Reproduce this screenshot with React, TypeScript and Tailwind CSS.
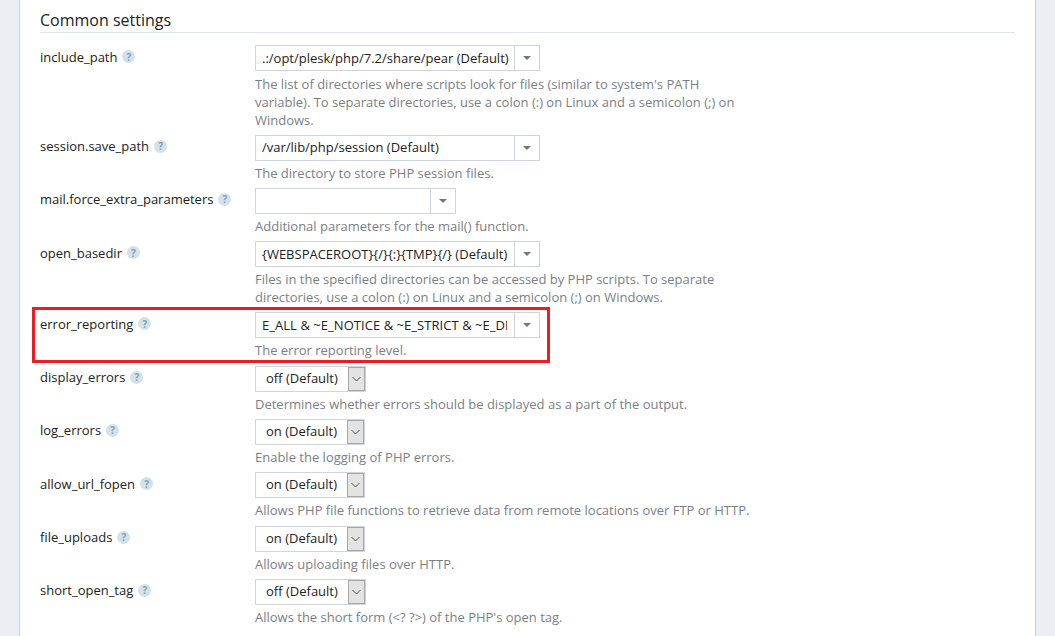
const rows: { label: string; value: string; w: "xl" | "md" | "on" | "off"; clip?: boolean; first?: boolean; tight?: boolean; desc: string[] }[] = [
  { label: "include_path", value: ".:/opt/plesk/php/7.2/share/pear (Default)", w: "xl", first: true, desc: ["The list of directories where scripts look for files (similar to system's PATH", "variable). To separate directories, use a colon (:) on Linux and a semicolon (;) on", "Windows."] },
  { label: "session.save_path", value: "/var/lib/php/session (Default)", w: "xl", tight: true, desc: ["The directory to store PHP session files."] },
  { label: "mail.force_extra_parameters", value: "", w: "md", desc: ["Additional parameters for the mail() function."] },
  { label: "open_basedir", value: "{WEBSPACEROOT}{/}{:}{TMP}{/} (Default)", w: "xl", desc: ["Files in the specified directories can be accessed by PHP scripts. To separate", "directories, use a colon (:) on Linux and a semicolon (;) on Windows."] },
  { label: "error_reporting", value: "E_ALL & ~E_NOTICE & ~E_STRICT & ~E_DEPRECATED", w: "xl", clip: true, desc: ["The error reporting level."] },
  { label: "display_errors", value: "off (Default)", w: "off", desc: ["Determines whether errors should be displayed as a part of the output."] },
  { label: "log_errors", value: "on (Default)", w: "on", desc: ["Enable the logging of PHP errors."] },
  { label: "allow_url_fopen", value: "on (Default)", w: "on", desc: ["Allows PHP file functions to retrieve data from remote locations over FTP or HTTP."] },
  { label: "file_uploads", value: "on (Default)", w: "on", desc: ["Allows uploading files over HTTP."] },
  { label: "short_open_tag", value: "off (Default)", w: "off", desc: ["Allows the short form (<? ?>) of the PHP's open tag."] },
];

function Help() {
  return (
    <span className="ml-[5px] inline-flex h-[13px] w-[13px] items-center justify-center rounded-full bg-[#d3e2ea] text-[10px] font-bold leading-none text-[#7da3b8]">
      ?
    </span>
  );
}

function Combo({ value, w, clip, tight }: { value: string; w: "xl" | "md"; clip?: boolean; tight?: boolean }) {
  return (
    <div className={`flex h-[26px] border border-[#ced4e0] bg-white ${w === "xl" ? "w-[285px]" : "w-[201px]"}`}>
      <div className={`min-w-0 flex-1 whitespace-nowrap pl-[6px] pr-[6px] text-[#222222] ${tight ? "leading-[23px]" : "leading-[24px]"}`}>
        <div className={clip ? "w-[245px] overflow-hidden tracking-[0.05px]" : ""}>{value}</div>
      </div>
      <div className="flex w-[25px] items-center justify-center border-l border-[#ced4e0]">
        <span className="h-0 w-0 border-x-[4px] border-t-[4px] border-x-transparent border-t-[#6f7780]" />
      </div>
    </div>
  );
}

function NativeSelect({ value, w }: { value: string; w: "on" | "off" }) {
  return (
    <div className={`flex h-[26px] border border-[#ced4e0] bg-white ${w === "off" ? "w-[111px]" : "w-[110px]"}`}>
      <div className="flex-1 whitespace-nowrap pl-[10px] leading-[23px] text-[#222222]">{value}</div>
      <div className="flex w-[17px] items-center justify-center border border-[#a6a6a6] bg-[#e3e3e3]">
        <svg width="9" height="6" viewBox="0 0 9 6" fill="none" stroke="#555555" strokeWidth="1">
          <path d="M0.5 1 L4.5 5 L8.5 1" />
        </svg>
      </div>
    </div>
  );
}

export default function App() {
  return (
    <div className="relative h-[636px] w-[1055px] overflow-hidden bg-[#ebeef3] font-['Open_Sans',sans-serif] text-[13px] leading-[18px]">
      <div className="ml-[19px] mr-[19px] h-full border-x border-[#c9cdd4] bg-white px-[20px]">
        <h2 className="mt-0 h-[33px] border-b border-[#dfe3ec] pt-[10px] text-[16px] leading-[21px] text-[#222222]">
          Common settings
        </h2>
        <div className="pt-[12px]">
          {rows.map((r) => (
            <div key={r.label} className={`flex ${r.first ? "pb-[5.5px]" : "pb-[6.3px]"}`}>
              <div className="flex h-[26px] w-[215px] shrink-0 items-center pb-[3px] text-[#222222]">
                <span>{r.label}</span>
                <Help />
              </div>
              <div className="w-[500px]">
                {r.w === "on" || r.w === "off" ? (
                  <NativeSelect value={r.value} w={r.w} />
                ) : (
                  <Combo value={r.value} w={r.w} clip={r.clip} tight={r.tight} />
                )}
                <div className={`text-[#7b7f85] ${r.first ? "mt-[4px]" : "mt-[3px]"}`}>
                  {r.desc.map((d) => (
                    <div key={d} className="whitespace-nowrap">{d}</div>
                  ))}
                </div>
              </div>
            </div>
          ))}
        </div>
      </div>
      <div className="pointer-events-none absolute left-[32px] top-[307px] h-[56px] w-[518px] border-[3px] border-[#ed1c24]" />
    </div>
  );
}
